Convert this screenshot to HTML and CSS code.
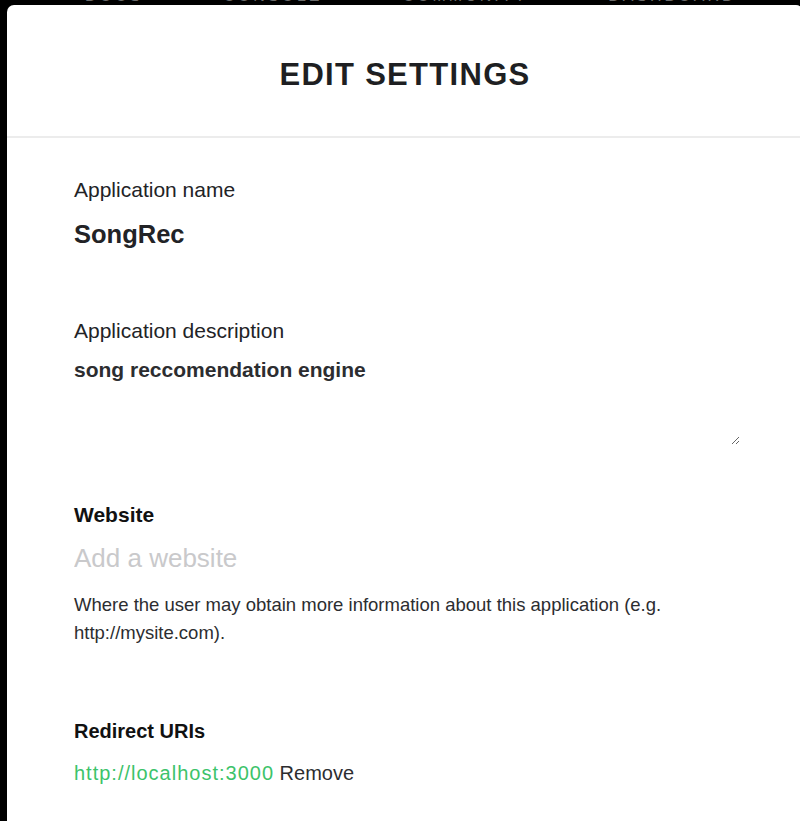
FILE: index.html
```html
<!DOCTYPE html>
<html lang="en">
<head>
    <meta charset="UTF-8">
    <meta name="viewport" content="width=device-width, initial-scale=1.0">
    <title>Edit Settings - SongRec</title>
    <link rel="stylesheet" href="styles.css">
</head>
<body>
    <nav class="topnav">
        <a href="#">Docs</a>
        <a href="#">Console</a>
        <a href="#">Community</a>
        <a href="#">Dashboard</a>
    </nav>

    <div class="modal">
        <div class="modal-header">
            <h1>Edit Settings</h1>
        </div>

        <form class="modal-body">
            <div class="field">
                <label class="label">Application name</label>
                <div class="app-name">SongRec</div>
            </div>

            <div class="field field-desc">
                <label class="label" for="desc">Application description</label>
                <textarea id="desc" class="desc">song reccomendation engine</textarea>
            </div>

            <div class="field field-website">
                <label class="label-bold" for="website">Website</label>
                <input id="website" class="website" type="text" placeholder="Add a website">
                <p class="help">Where the user may obtain more information about this application (e.g. http://mysite.com).</p>
            </div>

            <div class="field field-redirect">
                <label class="label-bold">Redirect URIs</label>
                <div class="uri-row">
                    <a href="#" class="uri">http://localhost:3000</a>
                    <a href="#" class="remove">Remove</a>
                </div>
            </div>
        </form>
    </div>
</body>
</html>
```

FILE: styles.css
```css
* {
    margin: 0;
    padding: 0;
    box-sizing: border-box;
}

body {
    font-family: 'Liberation Sans', Arial, sans-serif;
    background: #000;
    color: #222326;
    height: 821px;
    overflow: hidden;
    position: relative;
}

.topnav {
    display: flex;
    gap: 80px;
    padding-left: 85px;
    margin-top: -13px;
}

.topnav a {
    color: #6b6b6b;
    font-size: 16px;
    line-height: 18px;
    letter-spacing: 3px;
    text-transform: uppercase;
    text-decoration: none;
}

.modal {
    position: absolute;
    top: 5px;
    left: 7px;
    width: 796px;
    bottom: -20px;
    background: #fff;
    border-radius: 7px;
}

.modal-header {
    height: 133px;
    display: flex;
    align-items: center;
    justify-content: center;
    border-bottom: 2px solid #ececec;
}

.modal-header h1 {
    font-size: 31px;
    font-weight: bold;
    letter-spacing: 1.3px;
    text-transform: uppercase;
    color: #1e1f22;
    padding-top: 8px;
}

.modal-body {
    padding: 40px 67px 0;
}

.label {
    display: block;
    font-size: 21px;
    line-height: 24px;
    color: #222326;
}

.label-bold {
    display: block;
    font-size: 21px;
    line-height: 25px;
    font-weight: bold;
    color: #111;
}

.app-name {
    margin-top: 17px;
    font-size: 25.5px;
    line-height: 30px;
    font-weight: bold;
}

.field-desc {
    margin-top: 70px;
}

.desc {
    display: block;
    margin-top: 15px;
    width: 666px;
    height: 87px;
    border: none;
    outline: none;
    font-family: inherit;
    font-size: 21px;
    line-height: 24px;
    font-weight: bold;
    color: #2c2d30;
    resize: vertical;
}

.field-website {
    margin-top: 57px;
}

.website {
    display: block;
    margin-top: 16px;
    width: 600px;
    height: 30px;
    border: none;
    outline: none;
    font-family: inherit;
    font-size: 26px;
    line-height: 30px;
}

.website::placeholder {
    color: #c9c9cb;
}

.help {
    margin-top: 18px;
    max-width: 660px;
    font-size: 18.5px;
    line-height: 28px;
    color: #2c2d30;
}

.field-redirect {
    margin-top: 72px;
}

.field-redirect .label-bold {
    font-size: 20px;
    line-height: 24px;
}

.uri-row {
    margin-top: 18px;
    font-size: 20px;
    line-height: 24px;
}

.uri {
    color: #3cc36a;
    text-decoration: none;
    letter-spacing: 1px;
}

.remove {
    color: #2c2d30;
    text-decoration: none;
}
```
